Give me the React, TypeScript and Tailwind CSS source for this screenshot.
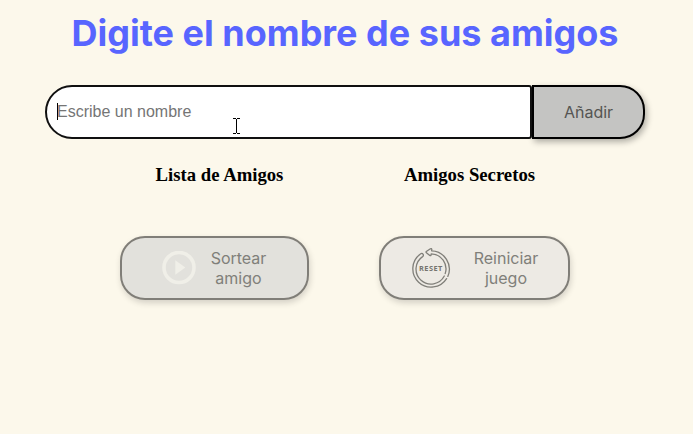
import React from "react";

function PlayIcon() {
  return (
    <svg className="h-[34px] w-[34px] shrink-0" viewBox="0 0 34 34" fill="none">
      <circle cx="17" cy="16.5" r="15" stroke="#f0efe8" strokeWidth="3.6" />
      <path d="M13.3 9.3v14.4L23.3 16.5z" fill="#f0efe8" />
    </svg>
  );
}

function ResetIcon() {
  return (
    <svg className="h-[42px] w-[40px] shrink-0" viewBox="0 0 40 42" fill="none" stroke="#807f79" strokeWidth="1.3" strokeLinecap="round" strokeLinejoin="round">
      <path d="M35.6 31.6A18.3 18.3 0 1 1 9.4 7Q10.9 5.8 12 7.2Q13 8.6 11.6 9.6A15 15 0 1 0 33.3 29" />
      <path d="M36.8 29.4A18.3 18.3 0 0 0 20.6 3.8L20.8 2.3Q20.6 1.2 19.4 1.8L15.3 4.5Q14.7 5.1 15.4 5.7L18.8 8.5Q19.8 9 20 8L20.2 6.9A15 15 0 0 1 34.2 26.6" />
      <text x="19.7" y="23.9" textAnchor="middle" textLength="23.4" fontSize="7.4" className="font-['Open_Sans'] font-bold" fill="#76756f" stroke="none">RESET</text>
    </svg>
  );
}

export default function App() {
  return (
    <main className="h-[434px] w-[693px] overflow-hidden bg-[#fcf8eb] font-['Inter',sans-serif]">
      <h1 className="pt-[11px] text-center text-[36px] leading-[44px] font-bold whitespace-nowrap text-[#5865ff]">
        <span className="relative -left-[1.5px]">Digite el nombre de sus amigos</span>
      </h1>

      <div className="mt-[30px] ml-[45px] flex h-[54px] w-[600px]">
        <div className="relative flex w-[487px] items-center rounded-l-[27px] rounded-r-[3px] border-2 border-[#101010] bg-white pl-[10px]">
          <span className="mb-px h-[17px] w-px bg-black" />
          <span className="-ml-px font-['Liberation_Sans',sans-serif] text-[16px] leading-[18px] text-[#757575]">Escribe un nombre</span>
          <svg className="absolute top-[31px] left-[185px] h-[17px] w-[9px]" viewBox="0 0 9 17" shapeRendering="crispEdges" fill="#000">
            <path d="M1 0h3v1H1zM5 0h3v1H5zM4 1h1v14H4zM1 15h3v1H1zM5 15h3v1H5z" />
          </svg>
        </div>
        <button className="w-[113px] rounded-r-[25px] border-2 border-black bg-[#c4c4c2] text-[16px] text-[#555552] shadow-[2px_3px_6px_rgba(0,0,0,0.3)]">Añadir</button>
      </div>

      <div className="mt-[25px] ml-[90.5px] flex font-['Liberation_Serif',serif] text-[18.72px] leading-[22px] font-bold text-black">
        <h2 className="w-[258px] text-center">Lista de Amigos</h2>
        <h2 className="w-[242px] text-center">Amigos Secretos</h2>
      </div>

      <div className="mt-[50px] ml-[120px] flex gap-[70px] text-[16px] leading-5 text-[#807f7a]">
        <button className="flex h-[64px] w-[189px] items-center rounded-[25px] border-2 border-[#807e78] bg-[#e2e1dc] pl-10 shadow-[1px_3px_6px_rgba(0,0,0,0.16)]">
          <PlayIcon />
          <span className="ml-[11px] w-[63px] text-center">Sortear amigo</span>
        </button>
        <button className="flex h-[64px] w-[191px] items-center rounded-[25px] border-2 border-[#807e78] bg-[#edeae4] pl-[30px] shadow-[1px_3px_6px_rgba(0,0,0,0.16)]">
          <ResetIcon />
          <span className="ml-[20px] w-[70px] text-center">Reiniciar juego</span>
        </button>
      </div>
    </main>
  );
}
